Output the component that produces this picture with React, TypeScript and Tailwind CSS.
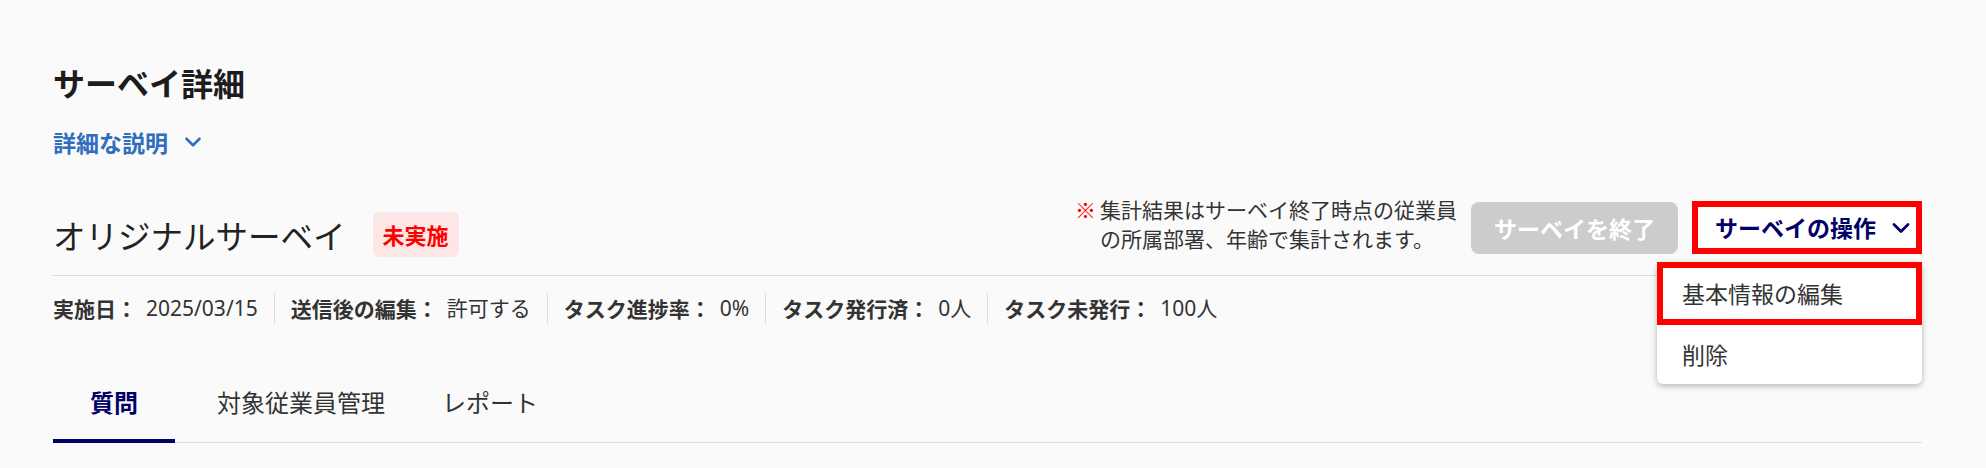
import React from 'react';
import { ChevronDown } from 'lucide-react';

const font = { fontFamily: '"Noto Sans CJK JP", "Noto Sans", sans-serif' };
const latin = { fontFamily: '"Noto Sans", "Noto Sans CJK JP", sans-serif' };

const MetaItem: React.FC<{ label: string; value: string; last?: boolean }> = ({ label, value, last }) => (
    <div className="flex items-center">
        <span className="font-bold text-[#333333]">{label}</span>
        <span className="ml-[9px] text-[#333333]" style={latin}>{value}</span>
        {!last && <div className="mx-[16px] w-px h-[31px] bg-[#dddddd]"></div>}
    </div>
);

export default function App() {
    return (
        <div className="w-[1986px] h-[468px] bg-[#fafafa] overflow-hidden" style={font}>
            <div className="pl-[53px] pr-[64px] pt-[60px]">
                <h1 className="text-[32px] leading-[45px] font-bold text-[#1c1c1c]">サーベイ詳細</h1>
                <button className="mt-[21px] flex items-center text-[23px] leading-[32px] font-bold text-[#2f6dbe]">
                    詳細な説明
                    <ChevronDown size={26} strokeWidth={2.4} className="ml-[12px]" />
                </button>

                <div className="mt-[43px] flex justify-between items-start">
                    <div className="mt-[11px] flex items-center gap-[27px]">
                        <h2 className="text-[32.5px] leading-[45px] text-[#222222]">オリジナルサーベイ</h2>
                        <span className="h-[45px] px-[10px] flex items-center rounded-[6px] bg-[#fde6e6] text-[22px] font-bold text-[#ff0000]">
                            未実施
                        </span>
                    </div>

                    <div className="relative flex items-start gap-[14px]">
                        <div className="-mt-[6px] flex text-[21px] leading-[29px] text-[#333333] whitespace-nowrap">
                            <span className="text-[#ff0000] mr-[4px]">※</span>
                            <p>
                                集計結果はサーベイ終了時点の従業員
                                <br />
                                の所属部署、年齢で集計されます。
                            </p>
                        </div>
                        <button className="mt-[1px] w-[207px] h-[52px] rounded-[8px] bg-[#cccccc] text-white text-[23px] font-bold">
                            サーベイを終了
                        </button>
                        <button className="w-[230px] h-[53px] border-[6px] border-[#ff0000] bg-white flex items-center pl-[17px] text-[23px] font-bold text-[#000066]">
                            サーベイの操作
                            <ChevronDown size={28} strokeWidth={2.4} className="ml-[11px]" />
                        </button>

                        <div className="absolute right-0 top-[61px] w-[265px] bg-white rounded-[6px] shadow-[0_2px_6px_rgba(0,0,0,0.28)] z-10">
                            <div className="h-[63px] border-[6px] border-[#ff0000] flex items-center pl-[19px] text-[23px] text-[#333333]">
                                基本情報の編集
                            </div>
                            <div className="h-[59px] flex items-center pl-[25px] text-[23px] text-[#333333]">
                                削除
                            </div>
                        </div>
                    </div>
                </div>

                <div className="mt-[18px] h-px bg-[#dddddd]"></div>

                <div className="mt-[17px] flex items-center text-[21px] leading-[31px]">
                    <MetaItem label="実施日：" value="2025/03/15" />
                    <MetaItem label="送信後の編集：" value="許可する" />
                    <MetaItem label="タスク進捗率：" value="0%" />
                    <MetaItem label="タスク発行済：" value="0人" />
                    <MetaItem label="タスク未発行：" value="100人" last />
                </div>

                <div className="mt-[62px] flex border-b border-[#dddddd] text-[24px] leading-[32px]">
                    <div className="w-[122px] text-center pb-[20px] border-b-[4px] border-[#000066] -mb-px font-bold text-[#000066]">
                        質問
                    </div>
                    <div className="pl-[42px] pr-[28px] pb-[24px] text-[#333333]">対象従業員管理</div>
                    <div className="px-[29px] pb-[24px] text-[#333333]">レポート</div>
                </div>
            </div>
        </div>
    );
}
